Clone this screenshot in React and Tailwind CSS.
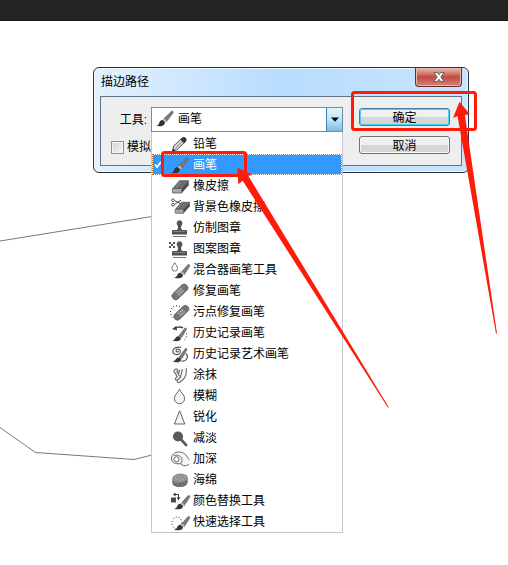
import React, { useState } from 'react';

const INK = '#4a4a4a';

// Shared pieces of the tool icons, all drawn on a 20x20 grid
function BrushShape() {
  return (
    <>
      <path d="M1 17.5c2 .2 2.6-1.2 3.3-3 .7-2 2.2-3 3.9-2.3 2 .8 2.3 3 .8 4.500C7.3 18.400 3.500 18.700 1 17.500z" fill="#333" />
      <path d="M8.200 11.300 16.300 3.500c1.200-1 2.500.1 1.800 1.400l-6.900 9.200z" fill="#7a7a7a" stroke="#555" strokeWidth="0.500" />
      <path d="m7.700 12 1.600-1.500 2.500 2.400-1.300 1.700z" fill="#bdbdbd" />
    </>
  );
}

function SmallBrush() {
  return (
    <>
      <path d="M4 17.400c2 .1 2.600-1 3.300-2.500.8-1.900 2.400-2.700 4.100-1.900 1.900.9 2.100 3 .6 4.200-1.800 1.400-5.700 1.500-8 .2z" fill="#383838" />
      <path d="m11 12.500 6.800-7.700c1-1 2.700.1 1.900 1.400l-5.400 8.500z" fill="#7a7a7a" stroke="#555" strokeWidth="0.500" />
      <path d="m10.600 12.900 1.300-1.500 2.600 2.200-1.100 1.700z" fill="#bdbdbd" />
    </>
  );
}

function EraserShape() {
  return (
    <>
      <path d="M9.500 4.700h9.200L11.800 12.500H2.800z" fill="#6c6c6c" stroke="#555" strokeWidth="0.800" />
      <path d="M2.600 12.500h9.200V17H3.200c-.6 0-.8-.4-.8-1z" fill="#a8a8a8" stroke="#555" strokeWidth="0.800" />
      <path d="m11.800 12.500 6.900-7.800v4.500L11.800 17z" fill="#4a4a4a" />
      <path d="m10.500 5.700-5 5.700" stroke="#8c8c8c" strokeWidth="1" />
    </>
  );
}

function StampShape() {
  return (
    <>
      <path d="M6.700 5.800a2.900 2.900 0 1 1 5.700 0c-.3 1.500-1.300 1.900-1.300 3.400 0 1.400.6 2.500 1.700 3.300H6.300C7.400 11.700 8 10.600 8 9.200c0-1.500-1-1.900-1.300-3.400z" fill="#555" />
      <path d="M3.300 12h12.500c.8 0 1.200.5 1.200 1.200V16.500H2v-3.300c0-.7.5-1.200 1.300-1.200z" fill="#505050" />
      <path d="M3.500 13.500h12" stroke="#858585" strokeWidth="1" />
      <path d="M3 18.500h13" stroke="#777" strokeWidth="1" />
    </>
  );
}

function BandageShape() {
  return (
    <g transform="rotate(-44 10 11)">
      <rect x="0.500" y="7.200" width="19" height="7.400" rx="3.500" fill="#757575" stroke="#5c5c5c" strokeWidth="0.800" />
      <rect x="6.200" y="7.600" width="7.600" height="6.600" fill="#858585" />
      <path d="M7.500 9.500h1M10 9.500h1M12.300 9.500h1M7.500 12.200h1M10 12.200h1M12.300 12.200h1" stroke="#ddd" strokeWidth="1" />
    </g>
  );
}

const ICONS = {
  pencil: (
    <>
      <path d="m2.500 17 1.200-5 8.300-8 3.500 3.500-8.300 8z" fill="#d8d8d8" stroke="#444" strokeWidth="0.900" />
      <path d="m5.500 14 8.200-8" stroke="#8a8a8a" strokeWidth="1" />
      <path d="M11.600 4.300c1.300-1.500 3-1.500 4.200-.4 1.200 1.200 1 2.600-.3 3.900l-1.400 1.400-3.800-3.600z" fill="#333" />
      <path d="m2.300 17.400.8-3 2.200 2.200z" fill="#222" />
    </>
  ),
  brush: <BrushShape />,
  eraser: <EraserShape />,
  bgEraser: (
    <>
      <g transform="translate(3 1) scale(.9)">
        <EraserShape />
      </g>
      <path d="M4.500 3.600 11 6.800M4.500 7.400 11 3.200" stroke="#444" strokeWidth="1" />
      <circle cx="3" cy="3.300" r="1.400" fill="#fff" stroke="#444" strokeWidth="0.900" />
      <circle cx="3" cy="7.700" r="1.400" fill="#fff" stroke="#444" strokeWidth="0.900" />
    </>
  ),
  stamp: <StampShape />,
  patternStamp: (
    <>
      <StampShape />
      <path d="M-1 3h2v2h-2zM3 3h2v2H3zM1 5h2v2H1zM-1 7h2v2h-2zM3 7h2v2H3z" fill="#555" />
    </>
  ),
  mixer: (
    <>
      <SmallBrush />
      <path d="M4.700 2.700C6 5.200 7.500 6.500 7.500 8.300a2.800 2.800 0 0 1-5.600 0c0-1.800 1.500-3.100 2.800-5.600z" fill="#fff" stroke="#666" strokeWidth="0.900" />
    </>
  ),
  bandage: <BandageShape />,
  spotHeal: (
    <>
      <path d="M10 4.500C5 2.200.3 5.500.5 10.300c.1 3 1.500 5.100 3.800 6.200" fill="none" stroke="#222" strokeWidth="1" strokeDasharray="1 2" />
      <g transform="translate(2 .5) scale(.94)">
        <BandageShape />
      </g>
    </>
  ),
  historyBrush: (
    <>
      <path d="M2 17.300c2 .2 2.700-1 3.500-2.300 1-1.600 2.500-2.200 4.100-1.300 1.700 1 1.700 2.600.2 3.600-1.800 1.200-5.500 1.300-7.800 0z" fill="#383838" />
      <path d="m8.700 13 6-7.700c.8-1 2.200 0 1.700 1.100l-4.700 8.200z" fill="#7a7a7a" stroke="#555" strokeWidth="0.500" />
      <path d="M5 5.500c2.500-1.700 5.500-1.900 8-.8" fill="none" stroke="#444" strokeWidth="1.500" />
      <path d="M2 6 6.500 2.800 7 7.500z" fill="#444" />
      <path d="M16.500 10.500v2.500c0 2-1 3.700-3.500 4.500" fill="none" stroke="#333" strokeWidth="1" strokeDasharray="1 2" />
    </>
  ),
  artHistory: (
    <>
      <path d="M8.300 6.800c.2 1.300-1.800 1.600-2.200.3-.4-1.600 1.600-2.600 3.200-1.600 2 1.300 1 4.200-1.400 4.900-2.800.8-5.300-1-5-3.600.3-3 4.500-4.400 8.300-3.300" fill="none" stroke="#555" strokeWidth="1.200" />
      <path d="M2.500 17.300c2 .2 2.700-.9 3.500-2.200 1-1.600 2.500-2 4-1.200 1.600 1 1.600 2.600.1 3.500-1.800 1.200-5.400 1.200-7.600-.1z" fill="#383838" />
      <path d="m9 13.200 6.200-8.500c.8-1 2.200 0 1.700 1.100L12 14.600z" fill="#7a7a7a" stroke="#555" strokeWidth="0.500" />
      <path d="M15.500 9.500c2 .7 2.500 3.200 1.300 5.200-1.200 2-3.300 2.900-5.300 2.300" fill="none" stroke="#555" strokeWidth="1.200" />
    </>
  ),
  smudge: (
    <g fill="none" stroke="#666" strokeWidth="1.100" strokeLinejoin="round" strokeLinecap="round">
      <path d="M7 4.200C5.300 3.600 3.500 5 4 6.500c.3 1 1.400 1.500 1.900 2.700L7 12.300c-1.300.3-2 1.200-1.600 2.100.4.800 1.500.7 2.500.3-.8 1-1 2.200-.2 2.700.9.600 2.200-.2 3.300-1.100 3-2.300 4.600-4.500 5.100-7.500l.3-5.300" fill="#f6f6f6" />
      <path d="M7 4.200c1 .7 1 1.600.4 2.300M6.800 6.500 9.500 11M9.500 5.300 8.800 8M12.300 4.500 11.500 8l-1 4.200M8 14.500l2.800-2.400" />
    </g>
  ),
  drop: <path d="M9.500 3.300c1.700 3.700 5.200 5.800 5.200 9.200a5.200 5.200 0 0 1-10.400 0c0-3.400 3.500-5.500 5.200-9.200z" fill="#f3f3f3" stroke="#666" strokeWidth="1" />,
  sharpen: <path d="M9.600 3.700 14.800 17H4.400z" fill="#f3f3f3" stroke="#666" strokeWidth="1" />,
  dodge: (
    <>
      <circle cx="8" cy="8.500" r="5.100" fill="#5a5a5a" />
      <path d="m11.500 12 4.600 5" stroke="#5a5a5a" strokeWidth="2.600" strokeLinecap="round" />
    </>
  ),
  burn: (
    <g fill="#f6f6f6" stroke="#666" strokeWidth="1" strokeLinejoin="round">
      <path d="M19.500 10.500c-1.500-.6-1.700-2-2.700-3.400C14.500 3.700 10.500 2.500 7 3.200c-3.700.8-6 3.700-5.500 7 .5 3 3 4.600 6.200 4.600h3c1.700 1.700 4 2.200 6 1.700 1-.3 1.800-.7 2.500-1.200" />
      <circle cx="6.500" cy="10.300" r="2.600" fill="#fff" />
      <path d="M4 6.700c3-1.200 6.300-.2 7.700 2.500.7 1.500.3 3.200-1 5.600" fill="none" />
    </g>
  ),
  sponge: (
    <>
      <path d="M2.300 9c.5-3.300 4-5.300 8.200-5.300 4.500 0 7.200 1.600 7.200 4.300v4c-.3 3-3.500 5-8 5-4.700 0-7.500-1.600-7.400-4.200z" fill="#6a6a6a" />
      <ellipse cx="10" cy="8.300" rx="7.500" ry="4.400" fill="#949494" transform="rotate(-6 10 8.300)" />
      <path d="M5 8h1M8 6h1M11 7h1M14 6.500h1M7 9.500h1M10 10.300h1M13 9h1" stroke="#bbb" strokeWidth="1" />
      <path d="M4 13h1M7 14.500h1M11 14.700h1M14.500 12.500h1" stroke="#999" strokeWidth="1" />
    </>
  ),
  colorReplace: (
    <>
      <SmallBrush />
      <path d="M1 6.500h5v5H1z" fill={INK} />
      <path d="M4.500 3.500h4v4" fill="none" stroke="#333" strokeWidth="1" />
      <path d="M5.500 1.500v4l-2.500-2zM6.500 6.500h4l-2 2.500z" fill="#333" />
    </>
  ),
  quickSelect: (
    <>
      <ellipse cx="7" cy="11" rx="5" ry="6" fill="none" stroke="#222" strokeWidth="1" strokeDasharray="1 2" />
      <SmallBrush />
    </>
  ),
};

const TOOLS = [
  { name: '铅笔', icon: 'pencil' },
  { name: '画笔', icon: 'brush' },
  { name: '橡皮擦', icon: 'eraser' },
  { name: '背景色橡皮擦', icon: 'bgEraser' },
  { name: '仿制图章', icon: 'stamp' },
  { name: '图案图章', icon: 'patternStamp' },
  { name: '混合器画笔工具', icon: 'mixer' },
  { name: '修复画笔', icon: 'bandage' },
  { name: '污点修复画笔', icon: 'spotHeal' },
  { name: '历史记录画笔', icon: 'historyBrush' },
  { name: '历史记录艺术画笔', icon: 'artHistory' },
  { name: '涂抹', icon: 'smudge' },
  { name: '模糊', icon: 'drop' },
  { name: '锐化', icon: 'sharpen' },
  { name: '减淡', icon: 'dodge' },
  { name: '加深', icon: 'burn' },
  { name: '海绵', icon: 'sponge' },
  { name: '颜色替换工具', icon: 'colorReplace' },
  { name: '快速选择工具', icon: 'quickSelect' },
];

function ToolIcon({ name }) {
  return (
    <svg viewBox="0 0 20 20" className="size-5 shrink-0 overflow-visible" aria-hidden="true">
      {ICONS[name]}
    </svg>
  );
}

function ToolOption({ tool, selected, onSelect }) {
  return (
    <li role="option" aria-selected={selected}>
      <button
        type="button"
        onClick={() => onSelect(tool.name)}
        className={
          selected
            ? 'flex h-[21px] w-full items-center border border-dotted border-[#c87820] bg-[#3399ff] bg-clip-padding text-left text-white'
            : 'flex h-[21px] w-full items-center border border-transparent text-left text-black'
        }
      >
        <span className="flex w-[17px] shrink-0 pl-px">
          {selected && (
            <svg viewBox="0 0 8 8" className="size-2" aria-hidden="true">
              <path d="m1 3.500 2 2.500 4-5" fill="none" stroke="#fff" strokeWidth="1.800" />
            </svg>
          )}
        </span>
        <ToolIcon name={tool.icon} />
        <span className="pl-[3px]">{tool.name}</span>
      </button>
    </li>
  );
}

function ToolSelect({ value, onChange }) {
  const current = TOOLS.find((tool) => tool.name === value);

  return (
    <div className="relative min-w-0 flex-1">
      <div className="grid h-[25px] border border-[#6f8fa5] bg-white">
        <select
          id="tool"
          value={value}
          onChange={(e) => onChange(e.target.value)}
          className="col-start-1 row-start-1 w-full appearance-none bg-white pb-[2px] pl-[26px] text-black outline-none"
        >
          {TOOLS.map((tool) => (
            <option key={tool.name}>{tool.name}</option>
          ))}
        </select>
        <span className="pointer-events-none col-start-1 row-start-1 flex justify-between pl-[3px]">
          <ToolIcon name={current.icon} />
          <span className="flex w-4 items-center justify-center border-l border-[#3c7fb1] bg-linear-to-b from-[#e3f4fc] via-[#bee6fd] to-[#7fbcdf]">
            <svg viewBox="0 0 8 5" className="h-[5px] w-2" aria-hidden="true">
              <path d="M0 .5h8L4 4.800z" fill="#000" />
            </svg>
          </span>
        </span>
      </div>

      <ul role="listbox" aria-label="工具" className="absolute inset-x-0 top-full z-10 border border-t-0 border-[#c5c5d3] bg-white pt-px">
        {TOOLS.map((tool) => (
          <ToolOption key={tool.name} tool={tool} selected={tool.name === value} onSelect={onChange} />
        ))}
      </ul>
    </div>
  );
}

function StrokePathDialog() {
  const [tool, setTool] = useState('画笔');
  const [simulate, setSimulate] = useState(false);

  return (
    <section
      role="dialog"
      aria-labelledby="dialog-title"
      className="rounded-md border border-[#26343f] bg-linear-to-r from-[#e4f1fd] via-[#b8dcff] to-[#c9e5fc] px-1.5 pb-1.5 shadow-[inset_0_0_0_1px_#eef8ff]"
    >
      <header className="flex h-7 items-start justify-between">
        <h1 id="dialog-title" className="pt-[5px] pl-px leading-[18px]">描边路径</h1>
        <button
          type="button"
          aria-label="关闭"
          className="flex h-[19px] w-[47px] items-center justify-center rounded-b-[4px] border border-t-0 border-[#6b2b2e] bg-linear-to-b from-[#e5a79c] from-10% via-[#c14a3e] via-50% to-[#d08378] shadow-[inset_0_0_0_1px_#e9b9b0]"
        >
          <svg viewBox="0 0 12 10" className="h-2.5 w-3" aria-hidden="true">
            <path d="M1 .5h3.200L6 2.800 7.800.5H11L7.800 5 11 9.500H7.800L6 7.200 4.200 9.500H1L4.200 5z" fill="#fff" stroke="#555a6e" strokeWidth="0.900" />
          </svg>
        </button>
      </header>

      <form
        onSubmit={(e) => e.preventDefault()}
        className="flex h-[70px] gap-4 border border-[#5f7382] bg-[#eeeeee] pt-2.5 pr-[11px] pl-2.5"
      >
        <div className="flex min-w-0 flex-1 flex-col gap-2">
          <div className="flex items-center gap-1">
            <label htmlFor="tool" className="w-9 shrink-0 text-right whitespace-nowrap">工具:</label>
            <ToolSelect value={tool} onChange={setTool} />
          </div>
          <label className="flex items-center gap-[3px] leading-[15px]">
            <input
              type="checkbox"
              checked={simulate}
              onChange={(e) => setSimulate(e.target.checked)}
              className="size-[13px] appearance-none border border-[#8e8f8f] bg-linear-to-br from-[#cfd3d6] to-[#f6f6f6] shadow-[inset_0_0_0_1px_#f4f4f4] checked:bg-[#3399ff]"
            />
            模拟
          </label>
        </div>

        <div className="flex w-[91px] shrink-0 flex-col gap-2.5 pt-px">
          <button type="submit" className="flex h-[18px] items-center justify-center rounded-[3px] border border-[#3c7fb1] bg-linear-to-b from-[#f0f0f0] from-50% to-[#d6d6d6] to-50% pt-[2px] shadow-[inset_0_0_0_1px_#46d3f7]">
            确定
          </button>
          <button type="button" className="flex h-[18px] items-center justify-center rounded-[3px] border border-[#707070] bg-linear-to-b from-[#f0f0f0] from-50% to-[#d6d6d6] to-50% pt-[2px] shadow-[inset_0_0_0_1px_#f8f8f8]">
            取消
          </button>
        </div>
      </form>
    </section>
  );
}

// Red tutorial marks over the dialog
function Annotations() {
  return (
    <svg width="508" height="565" className="pointer-events-none absolute top-0 left-0 z-20" aria-hidden="true">
      <g fill="none" stroke="#ff1b0a" strokeWidth="3">
        <rect x="162.500" y="152.500" width="83" height="23" rx="2" />
        <rect x="352.500" y="92.500" width="123" height="37" rx="2" />
      </g>
      <g fill="#ff1b0a">
        <path d="m237.300 167.700 15.400 7.400-4.500.6L388.800 407.300l-.8.500L242.700 180.800l-4.400 3.500z" />
        <path d="m459.500 101.700 10.300 12.600-5 .7 32.200 218.500h-1L457.500 116l-4.500 2z" />
      </g>
    </svg>
  );
}

export default function App() {
  return (
    <div className="relative min-h-screen overflow-hidden bg-white font-['Liberation_Sans','Noto_Sans_CJK_SC',sans-serif] text-xs text-black">
      <div className="h-[21px] border-b border-[#1b1818] bg-[#232323]" />

      <svg width="160" height="565" className="pointer-events-none absolute top-0 left-0" aria-hidden="true">
        <path d="m0 241 152-24.500M0 427.500l35.500 25 98.500 7 18-4.500" fill="none" stroke="#555" strokeWidth="0.800" />
      </svg>

      <main className="relative pt-[46px] pr-[39px] pb-10 pl-[93px]">
        <StrokePathDialog />
      </main>

      <Annotations />
    </div>
  );
}
